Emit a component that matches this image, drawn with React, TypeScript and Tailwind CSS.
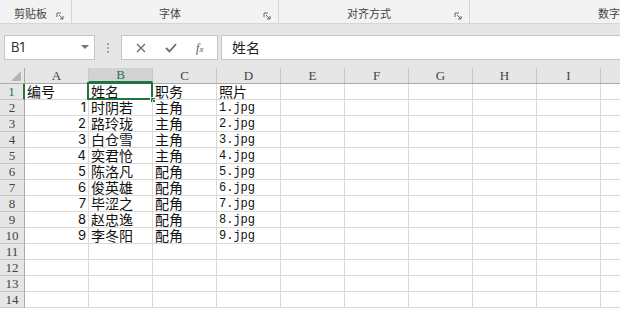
import React from "react";

const cols = ["A", "B", "C", "D", "E", "F", "G", "H", "I"];

const data: string[][] = [
  ["编号", "姓名", "职务", "照片"],
  ["1", "时阴若", "主角", "1.jpg"],
  ["2", "路玲珑", "主角", "2.jpg"],
  ["3", "白仓雪", "主角", "3.jpg"],
  ["4", "奕君怆", "主角", "4.jpg"],
  ["5", "陈洛凡", "配角", "5.jpg"],
  ["6", "俊英雄", "配角", "6.jpg"],
  ["7", "毕涩之", "配角", "7.jpg"],
  ["8", "赵忠逸", "配角", "8.jpg"],
  ["9", "李冬阳", "配角", "9.jpg"],
];

const sans = "font-['Inter','Noto_Sans_CJK_SC',sans-serif]";
const serif = "font-['Liberation_Serif','Noto_Sans_CJK_SC',serif]";
const mono = "font-['Liberation_Mono','Noto_Sans_CJK_SC',monospace]";

function Launcher() {
  return (
    <svg width="9" height="9" viewBox="0 0 9 9" className="text-[#666]">
      <path d="M1 1h4M1 1v4" stroke="currentColor" strokeWidth="1" fill="none" />
      <path d="M3 3l4 4M7 4v3H4" stroke="currentColor" strokeWidth="1" fill="none" />
    </svg>
  );
}

function RibbonGroup({ label, width, last }: { label: string; width: number; last?: boolean }) {
  return (
    <div
      className={`relative h-full flex items-end justify-center pb-[3px] pr-[10px] ${last ? "" : "border-r border-[#d4d4d4]"}`}
      style={{ width }}
    >
      <span className="text-[11px] text-[#444] leading-none">{label}</span>
      {!last && (
        <span className="absolute right-[6px] bottom-[2px]">
          <Launcher />
        </span>
      )}
    </div>
  );
}

export default function App() {
  return (
    <div className={`w-[620px] h-[309px] overflow-hidden bg-white ${sans}`}>
      {/* ribbon bottom */}
      <div className="h-[24px] bg-[#f3f3f3] border-b border-[#d6d6d6] flex">
        <RibbonGroup label="剪贴板" width={72} />
        <RibbonGroup label="字体" width={207} />
        <RibbonGroup label="对齐方式" width={191} />
        <div className="h-full flex items-end pb-[3px] pl-[128px]">
          <span className="text-[11px] text-[#444] leading-none whitespace-nowrap">数字</span>
        </div>
      </div>

      {/* formula bar */}
      <div className="h-[44px] bg-[#e6e6e6] flex items-start pt-[11px] pl-[4px]">
        <div className="w-[91px] h-[25px] bg-white border border-[#c6c6c6] flex items-center justify-between pl-[6px] pr-[5px]">
          <span className="text-[13px] text-[#333]">B1</span>
          <svg width="8" height="5" viewBox="0 0 8 5">
            <path d="M0 0h8L4 4z" fill="#777" />
          </svg>
        </div>
        <div className="w-[26px] h-[25px] flex flex-col items-center justify-center gap-[2px]">
          <span className="w-[2px] h-[2px] bg-[#aaa]" />
          <span className="w-[2px] h-[2px] bg-[#aaa]" />
          <span className="w-[2px] h-[2px] bg-[#aaa]" />
        </div>
        <div className="w-[97px] h-[25px] bg-white border border-[#c6c6c6] flex items-center justify-around px-[4px]">
          <svg width="10" height="10" viewBox="0 0 10 10">
            <path d="M1 1l8 8M9 1l-8 8" stroke="#6a6a6a" strokeWidth="1.3" />
          </svg>
          <svg width="12" height="10" viewBox="0 0 12 10">
            <path d="M1 5l3.5 3.5L11 1" stroke="#6a6a6a" strokeWidth="1.8" fill="none" />
          </svg>
          <span className={`${serif} italic text-[12px] text-[#555] leading-none`}>
            f<span className="text-[9px]">x</span>
          </span>
        </div>
        <div className="ml-[3px] flex-1 h-[25px] bg-white border border-[#c6c6c6] border-r-0 flex items-center pl-[10px]">
          <span className="text-[14px] text-[#222]">姓名</span>
        </div>
      </div>

      {/* column headers */}
      <div className="flex h-[16px] bg-[#e6e6e6] border-b border-[#ababab]">
        <div className="w-[25px] shrink-0 h-full border-r border-[#ababab] relative">
          <svg width="10" height="10" viewBox="0 0 10 10" className="absolute right-[3px] bottom-[2px]">
            <path d="M10 0v10H0z" fill="#b4b4b4" />
          </svg>
        </div>
        {cols.map((c) => (
          <div
            key={c}
            className={`w-[64px] shrink-0 h-full flex items-center justify-center border-r border-[#c8c8c8] ${serif} text-[13px] leading-none ${
              c === "B" ? "bg-[#d2d2d2] text-[#217346] border-b-2 border-b-[#217346]" : "text-[#444]"
            }`}
          >
            {c}
          </div>
        ))}
        <div className="flex-1" />
      </div>

      {/* rows */}
      {Array.from({ length: 14 }).map((_, r) => {
        const row = data[r];
        return (
          <div key={r} className="flex h-[16px]">
            <div
              className={`w-[25px] shrink-0 h-full flex items-center justify-center bg-[#e6e6e6] border-b border-[#c8c8c8] ${serif} text-[13px] leading-none ${
                r === 0 ? "bg-[#d2d2d2] text-[#217346] border-r-2 border-r-[#217346]" : "text-[#444] border-r border-r-[#ababab]"
              }`}
            >
              {r + 1}
            </div>
            {cols.map((c, ci) => {
              const v = row ? row[ci] : undefined;
              const isSel = r === 0 && ci === 1;
              const right = ci === 0 && r > 0;
              const isJpg = ci === 3 && r > 0;
              return (
                <div
                  key={c}
                  className={`relative w-[64px] shrink-0 h-full border-r border-b border-[#dadada] flex items-center whitespace-nowrap leading-none text-[#111] ${
                    right ? "justify-end pr-[2px] text-[13px]" : "pl-[2px] text-[14px]"
                  } ${isJpg ? `${mono} !text-[12px]` : ""}`}
                >
                  {v}
                  {isSel && (
                    <>
                      <span className="absolute left-[-2px] top-[-2px] right-[-1px] bottom-[-1px] border-2 border-[#217346] pointer-events-none" />
                      <span className="absolute right-[-4px] bottom-[-4px] w-[6px] h-[6px] bg-[#217346] border border-white" />
                    </>
                  )}
                </div>
              );
            })}
            <div className="flex-1 border-b border-[#dadada]" />
          </div>
        );
      })}
    </div>
  );
}
